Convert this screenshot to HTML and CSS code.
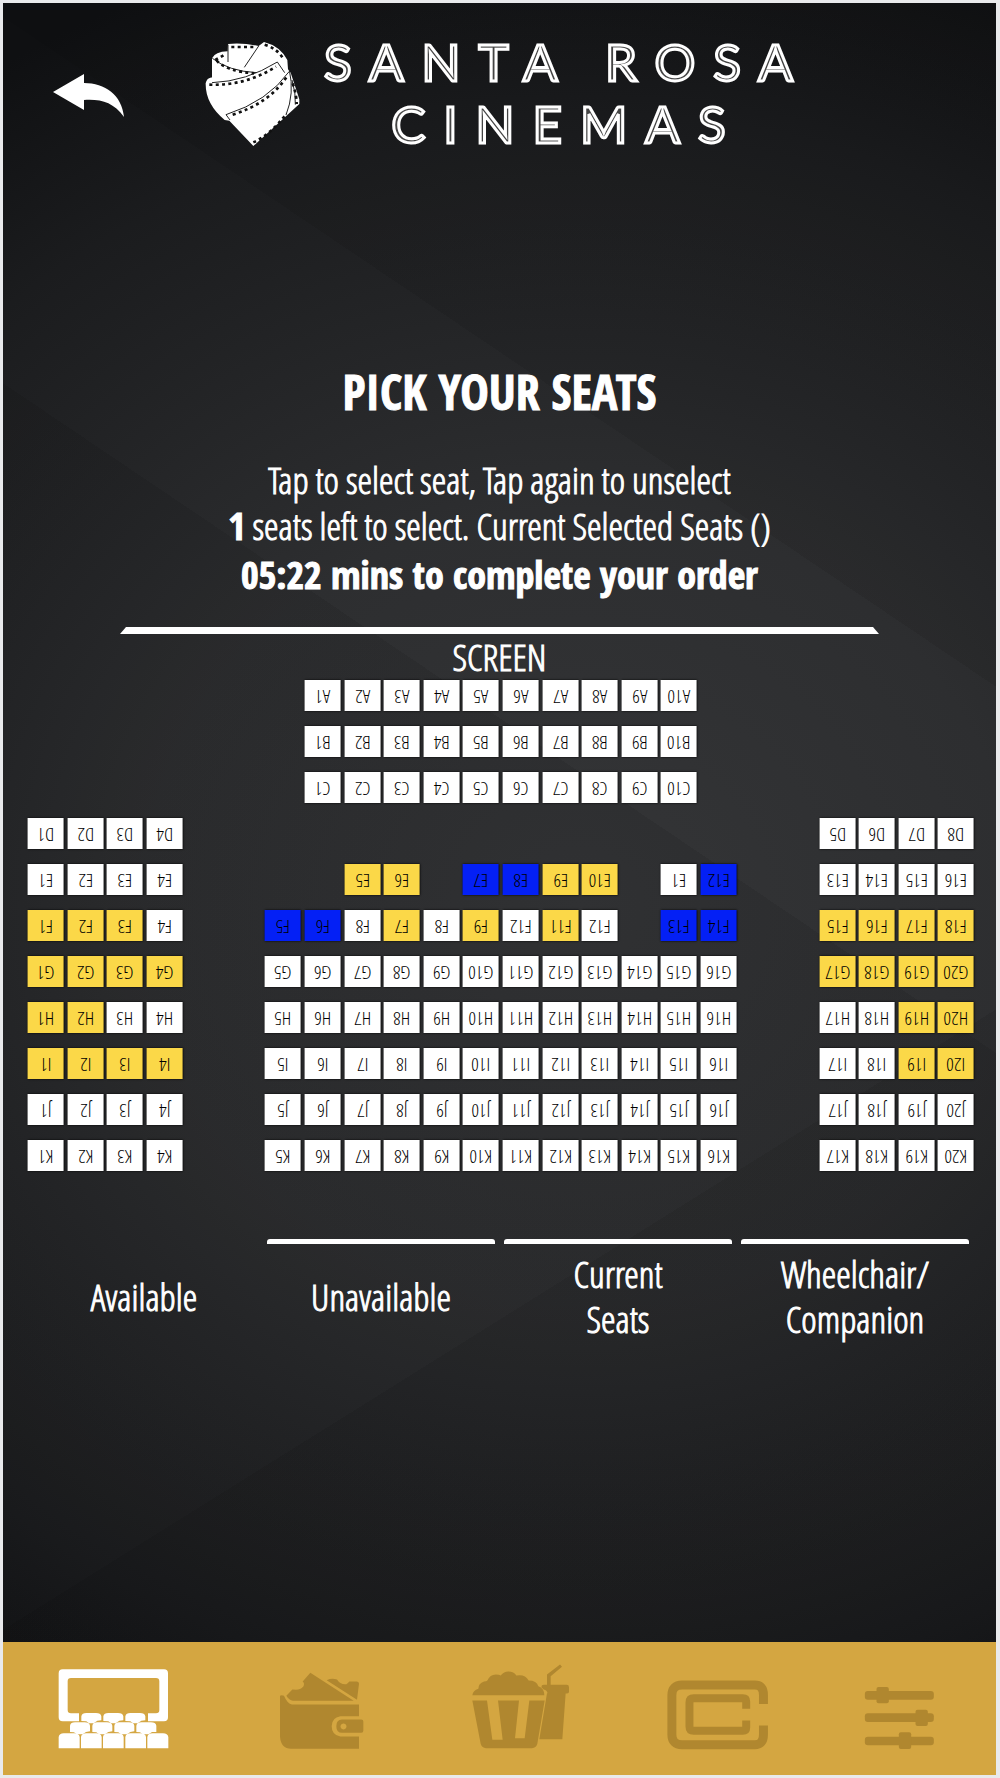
FILE: index.html
```
<!DOCTYPE html>
<html lang="en">
<head>
<meta charset="utf-8">
<meta name="viewport" content="width=device-width, initial-scale=1">
<title>Santa Rosa Cinemas – Pick your seats</title>
<link rel="stylesheet" href="styles.css">
</head>
<body>
<div class="kiosk">
  <header class="header">
    <button class="back" type="button" aria-label="Back">
      <svg viewBox="0 0 72 44" width="72" height="44"><path d="M0 19 31 1v9c21 0 38 12 40 34C60 29 48 26 31 27v10z"/></svg>
    </button>
    <svg class="rose" viewBox="0 0 360 375" width="120" height="125" aria-hidden="true">
      <path fill="#fff" d="M66 156V85Q75 65 113 64L114 42Q160 38 206 48L222 36Q270 48 292 90L294 118 302 128 328 208V222L190 348 118 272 104 270Q46 222 47 160 50 144 66 142Z"/>
      <g fill="none" stroke="#222" stroke-width="3">
        <path d="M114 44v52M206 48 163 112M67 85q48 38 132 43M66 158q103-4 196-62l22 32M108 254q126-40 190-130M108 254l12 16M298 120q16 70-10 135M306 150q12 40 10 74"/>
      </g>
      <g fill="none" stroke="#111" stroke-width="8" stroke-dasharray="9 10">
        <path d="M124 51h76M224 44q40 12 58 46M76 90l28-16M80 92q30 32 112 38M58 164q108 4 200-54M128 254q110-34 164-116M308 160q12 36 12 62M190 337q50-22 100-86"/>
      </g>
    </svg>
    <h1 class="brand"><span>SANTA ROSA</span><span>CINEMAS</span></h1>
  </header>

  <main class="main">
    <h2 class="title">PICK YOUR SEATS</h2>
    <p class="hint">Tap to select seat, Tap again to unselect</p>
    <p class="hint"><b>1</b> seats left to select. Current Selected Seats ()</p>
    <p class="timer">05:22 mins to complete your order</p>

    <div class="screen-bar"></div>
    <p class="screen-label">SCREEN</p>

    <div class="seats">
      <i class="gap7"></i><button>A1</button><button>A2</button><button>A3</button><button>A4</button><button>A5</button><button>A6</button><button>A7</button><button>A8</button><button>A9</button><button>A10</button><i class="gap7"></i>

      <i class="gap7"></i><button>B1</button><button>B2</button><button>B3</button><button>B4</button><button>B5</button><button>B6</button><button>B7</button><button>B8</button><button>B9</button><button>B10</button><i class="gap7"></i>

      <i class="gap7"></i><button>C1</button><button>C2</button><button>C3</button><button>C4</button><button>C5</button><button>C6</button><button>C7</button><button>C8</button><button>C9</button><button>C10</button><i class="gap7"></i>

      <button>D1</button><button>D2</button><button>D3</button><button>D4</button><i class="gap16"></i><button>D5</button><button>D6</button><button>D7</button><button>D8</button>

      <button>E1</button><button>E2</button><button>E3</button><button>E4</button><i class="gap4"></i><button class="taken">E5</button><button class="taken">E6</button><i></i><button class="access">E7</button><button class="access">E8</button><button class="taken">E9</button><button class="taken">E10</button><i></i><button>E1</button><button class="access">E12</button><i class="gap2"></i><button>E13</button><button>E14</button><button>E15</button><button>E16</button>

      <button class="taken">F1</button><button class="taken">F2</button><button class="taken">F3</button><button>F4</button><i class="gap2"></i><button class="access">F5</button><button class="access">F6</button><button>F8</button><button class="taken">F7</button><button>F8</button><button class="taken">F9</button><button>F12</button><button class="taken">F11</button><button>F12</button><i></i><button class="access">F13</button><button class="access">F14</button><i class="gap2"></i><button class="taken">F15</button><button class="taken">F16</button><button class="taken">F17</button><button class="taken">F18</button>

      <button class="taken">G1</button><button class="taken">G2</button><button class="taken">G3</button><button class="taken">G4</button><i class="gap2"></i><button>G5</button><button>G6</button><button>G7</button><button>G8</button><button>G9</button><button>G10</button><button>G11</button><button>G12</button><button>G13</button><button>G14</button><button>G15</button><button>G16</button><i class="gap2"></i><button class="taken">G17</button><button class="taken">G18</button><button class="taken">G19</button><button class="taken">G20</button>

      <button class="taken">H1</button><button class="taken">H2</button><button>H3</button><button>H4</button><i class="gap2"></i><button>H5</button><button>H6</button><button>H7</button><button>H8</button><button>H9</button><button>H10</button><button>H11</button><button>H12</button><button>H13</button><button>H14</button><button>H15</button><button>H16</button><i class="gap2"></i><button>H17</button><button>H18</button><button class="taken">H19</button><button class="taken">H20</button>

      <button class="taken">I1</button><button class="taken">I2</button><button class="taken">I3</button><button class="taken">I4</button><i class="gap2"></i><button>I5</button><button>I6</button><button>I7</button><button>I8</button><button>I9</button><button>I10</button><button>I11</button><button>I12</button><button>I13</button><button>I14</button><button>I15</button><button>I16</button><i class="gap2"></i><button>I17</button><button>I18</button><button class="taken">I19</button><button class="taken">I20</button>

      <button>J1</button><button>J2</button><button>J3</button><button>J4</button><i class="gap2"></i><button>J5</button><button>J6</button><button>J7</button><button>J8</button><button>J9</button><button>J10</button><button>J11</button><button>J12</button><button>J13</button><button>J14</button><button>J15</button><button>J16</button><i class="gap2"></i><button>J17</button><button>J18</button><button>J19</button><button>J20</button>

      <button>K1</button><button>K2</button><button>K3</button><button>K4</button><i class="gap2"></i><button>K5</button><button>K6</button><button>K7</button><button>K8</button><button>K9</button><button>K10</button><button>K11</button><button>K12</button><button>K13</button><button>K14</button><button>K15</button><button>K16</button><i class="gap2"></i><button>K17</button><button>K18</button><button>K19</button><button>K20</button>
    </div>

    <ul class="legend">
      <li class="plain">Available</li>
      <li>Unavailable</li>
      <li>Current<br>Seats</li>
      <li>Wheelchair/<br>Companion</li>
    </ul>
  </main>

  <nav class="nav">
    <a class="active" href="#seats" aria-label="Seats">
      <svg viewBox="172 112 333 246" width="111" height="82">
        <path fill-rule="evenodd" d="M186 116h304q12 0 12 12v132q0 12-12 12h-48v-24h24q10 0 10-10v-86q0-10-10-10H211q-10 0-10 10v86q0 10 10 10h24v24h-49q-12 0-12-12V128q0-12 12-12z"/>
        <path d="M242 271v-14q2-10 15-10h29q14 0 16 10v12l-12 1-11 8h-14l-8-6zM308 271v-14q2-10 15-10h29q14 0 16 10v12l-12 1-11 8h-14l-8-6zM374 271v-14q2-10 15-10h29q14 0 16 10v12l-12 1-11 8h-14l-8-6z"/>
        <path d="M208 304v-19q2-10 15-10h29q14 0 16 10v17l-12 2-10 7h-18l-8-6zM275 304v-19q2-10 15-10h29q14 0 16 10v17l-12 2-10 7h-18l-8-6zM341 304v-19q2-10 15-10h29q14 0 16 10v17l-12 2-10 7h-18l-8-6zM407 304v-19q2-10 15-10h29q14 0 16 10v19h-13l-10 7h-18l-8-6z"/>
        <path d="M174 353v-34q2-11 15-11h32q14 0 16 11v34zM241 353v-34q2-11 15-11h31q14 0 16 11v34zM307 353v-34q2-11 15-11h31q14 0 16 11v34zM374 353v-34q2-11 15-11h31q14 0 16 11v34zM440 353v-34q2-11 15-11h32q14 0 16 11v34z"/>
      </svg>
    </a>
    <a href="#wallet" aria-label="Wallet">
      <svg viewBox="838 122 258 236" width="86" height="79">
        <path d="M860 196 878 177 889 178Q902 178 911 168 916 159 909 153L932 127 1062 211H880Q868 209 860 196zM981 149Q996 142 1012 147 1022 163 1040 161 1045 158 1049 153H1072Q1078 154 1078 160L1072 208z"/>
        <path d="M841 196q5-4 12 0 10 24 24 26h201v35h-56q-26 4-26 30t26 31h56v37H874q-30 0-33-36z"/>
        <path fill-rule="evenodd" d="M1027 267h58q6 0 6 6v28q0 6-6 6h-58q-17 0-17-20t17-20zM1031 279a9 9 0 1 0 1 0z"/>
      </svg>
    </a>
    <a href="#food" aria-label="Food and drinks">
      <svg viewBox="1412 108 297 260" width="99" height="87">
        <path d="M1416 204q2-14 18-19 0-16 17-22 8 0 10-3 8-18 25-18 12 0 15 3 10-12 23-12 17 0 24 12 26-5 37 15 24 0 29 17 18 6 18 27z"/>
        <path fill-rule="evenodd" d="M1416 220h217l-22 130q-4 13-16 13h-138q-12 0-16-13zM1460 220l16 118h31l-14-118zM1556 220l-12 113h29l14-113z"/>
        <path d="M1623 180q0-7 7-7h10v-31l39-30 6 7-34 28v26h48q7 0 7 7v14q0 5-6 5h-58q-2-10-12-12zM1640 198h56l-10 138h-69z"/>
      </svg>
    </a>
    <a href="#rewards" aria-label="Rewards card">
      <svg viewBox="500 140 312 214" width="104" height="71">
        <path fill="none" stroke="currentColor" stroke-width="27" d="M793 215v-27q0-30-26-30H548q-31 0-31 31v118q0 31 31 31h219q26 0 26-31v-27"/>
        <path fill="none" stroke="currentColor" stroke-width="24" d="M741 230v-22q0-10-10-10H583q-13 0-13 13v72q0 13 13 13h148q10 0 10-10v-21"/>
      </svg>
    </a>
    <a href="#settings" aria-label="Settings">
      <svg viewBox="1093 158 212 192" width="71" height="64">
        <rect x="1095" y="173" width="207" height="26" rx="9"/><rect x="1130" y="161" width="37" height="49" rx="6"/>
        <rect x="1095" y="240" width="207" height="26" rx="9"/><rect x="1247" y="229" width="37" height="49" rx="6"/>
        <rect x="1095" y="310" width="207" height="26" rx="9"/><rect x="1197" y="297" width="37" height="50" rx="6"/>
      </svg>
    </a>
  </nav>
</div>
</body>
</html>
```
FILE: styles.css
```
* { box-sizing: border-box; }

body {
  margin: 0;
  background: #e9eaec;
  font-family: "Open Sans Condensed Light", "Open Sans Condensed", sans-serif;
  color: #fff;
}

h1, h2, p, ul { margin: 0; padding: 0; }
button { font: inherit; border: 0; padding: 0; cursor: pointer; }

.kiosk {
  min-height: 100vh;
  display: flex;
  flex-direction: column;
  border: 3px solid #e9eaec;
  border-right-width: 4px;
  background:
    linear-gradient(34deg, rgba(0, 0, 0, .08) 57%, transparent 57%),
    linear-gradient(34deg, transparent 72%, rgba(0, 0, 0, .08) 72%),
    linear-gradient(148deg, transparent 68%, rgba(0, 0, 0, .08) 68%),
    radial-gradient(ellipse 110% 56% at 58% 51%, #343537 0%, #2d2e30 40%, #1b1c1e 80%, #0f1012 100%);
}

.header {
  display: flex;
  align-items: center;
  padding: 27px 50px 0;
}

.back {
  display: flex;
  margin-top: 4px;
  background: none;
}

.back svg { fill: #fff; }

.rose { margin-left: 65px; }

.brand {
  display: flex;
  flex-direction: column;
  align-items: center;
  margin-left: 14px;
  font: 400 51px/62px Lato, sans-serif;
  letter-spacing: 18px;
  color: #444;
  -webkit-text-stroke: 3px #fff;
}

.main { text-align: center; }

.title {
  margin-top: 205px;
  font: 800 48px/64px "Open Sans Condensed", sans-serif;
  -webkit-text-stroke: 1px #fff;
}

.hint {
  font-size: 37px;
  line-height: 46px;
  -webkit-text-stroke: 1px #fff;
}

.title + .hint { margin-top: 33px; }

.hint b {
  font-family: "Open Sans Condensed", sans-serif;
  font-weight: 700;
}

.timer {
  font: 800 38px/50px "Open Sans Condensed", sans-serif;
  -webkit-text-stroke: 1px #fff;
}

.screen-bar {
  height: 7px;
  margin: 28px 117px 0;
  background: #fff;
  clip-path: polygon(6px 0, calc(100% - 6px) 0, 100% 100%, 0 100%);
}

.screen-label {
  font-size: 37px;
  line-height: 46px;
  -webkit-text-stroke: 1px #fff;
}

.seats {
  display: grid;
  grid-template-columns: repeat(24, 1fr);
  grid-auto-rows: 31px;
  gap: 15px 4px;
  padding: 0 22px 0 25px;
}

.seats button {
  min-width: 0;
  padding-bottom: 4px;
  background: #fff;
  box-shadow: 0 0 2px #000;
  color: #000;
  font-size: 19px;
  line-height: 20px;
  transform: rotate(180deg);
}

.seats .taken { background: #fbd848; }
.seats .access { background: #0420f5; }

.gap2 { grid-column: span 2; }
.gap4 { grid-column: span 4; }
.gap7 { grid-column: span 7; }
.gap16 { grid-column: span 16; }

.legend {
  display: grid;
  grid-template-columns: repeat(4, 1fr);
  gap: 9px;
  margin-top: 68px;
  padding: 0 27px;
  list-style: none;
  font-size: 37px;
  line-height: 45px;
  -webkit-text-stroke: 1px #fff;
}

.legend li {
  display: flex;
  justify-content: center;
  align-items: center;
  min-height: 110px;
  padding-top: 4px;
  background: linear-gradient(#fff, #fff) top / 100% 5px no-repeat;
  border-radius: 3px;
}

.legend .plain { background: none; }

.nav {
  display: grid;
  grid-template-columns: 208fr 210fr 186fr 210fr 152fr;
  align-items: end;
  justify-items: center;
  min-height: 133px;
  margin-top: auto;
  padding: 0 21px 25px 6px;
  background: #d4a641;
}

.nav a {
  display: flex;
  color: #b0872f;
  fill: currentColor;
}

.nav .active { color: #fff; }
```
